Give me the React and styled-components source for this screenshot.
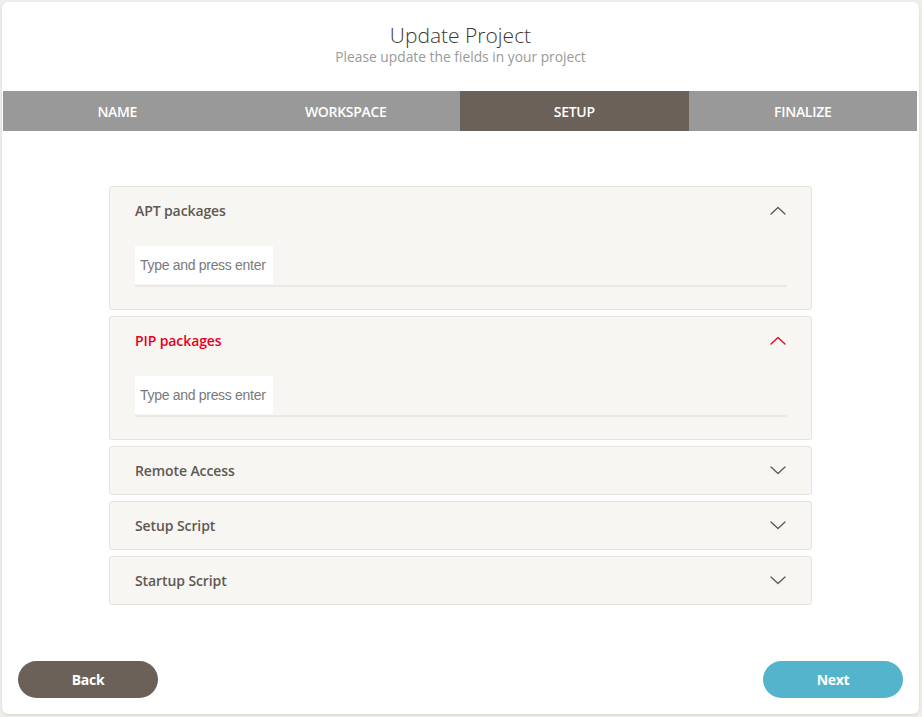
import React, { useState } from 'react';
import styled, { createGlobalStyle } from 'styled-components';

const GlobalStyle = createGlobalStyle`
  html, body {
    margin: 0;
    padding: 0;
    background: #efeeea;
    font-family: "Open Sans", "Liberation Sans", sans-serif;
  }
`;

const steps = ['Name', 'Workspace', 'Setup', 'Finalize'];

const sections = [
  { title: 'APT packages', open: true },
  { title: 'PIP packages', open: true, error: true },
  { title: 'Remote Access' },
  { title: 'Setup Script' },
  { title: 'Startup Script' }
];

const Card = styled.div`
  box-sizing: border-box;
  margin: 2px 3px 3px 2px;
  height: 712px;
  background: #fff;
  border-radius: 6px;
  box-shadow: 0 1px 3px rgba(0, 0, 0, 0.12);
  display: flex;
  flex-direction: column;
  overflow: hidden;
`;

const Header = styled.div`
  padding-top: 20px;
  text-align: center;
  margin-bottom: 25px;
`;

const Title = styled.h1`
  margin: 0;
  font-size: 21px;
  line-height: 26px;
  font-weight: 300;
  color: #3b3835;
`;

const Subtitle = styled.div`
  font-size: 13.8px;
  line-height: 18px;
  color: #9a9a9a;
`;

const Tabs = styled.div`
  display: grid;
  grid-template-columns: repeat(4, 1fr);
  margin: 0 2px 0 1px;
  height: 40px;
  background: #999999;
`;

const Tab = styled.div`
  display: flex;
  align-items: center;
  justify-content: center;
  color: #fff;
  font-size: 14px;
  font-weight: 600;
  text-transform: uppercase;
  letter-spacing: -0.3px;
  background: ${p => (p.$active ? '#6b6159' : 'transparent')};
`;

const Accordion = styled.div`
  width: 703px;
  margin: 55px auto 0;
  display: flex;
  flex-direction: column;
  gap: 6px;
`;

const Panel = styled.div`
  box-sizing: border-box;
  background: #f7f6f3;
  border: 1px solid #e6e3de;
  border-radius: 3px;
  padding: 0 24px ${p => (p.$open ? '22px' : '0')} 25px;
`;

const PanelHead = styled.div`
  height: 47px;
  display: flex;
  align-items: center;
  justify-content: space-between;
  font-size: 14px;
  font-weight: 600;
  letter-spacing: -0.1px;
  color: ${p => (p.$error ? '#e8001c' : '#5f5852')};
  cursor: pointer;
`;

const Chevron = styled.svg`
  width: 16px;
  height: 9px;
  margin-right: 1px;
`;

const Field = styled.div`
  margin-top: 12px;
  border-bottom: 2px solid #ebe9e6;
  padding-bottom: 1px;
`;

const TagInput = styled.input`
  box-sizing: border-box;
  display: block;
  width: 138px;
  height: 38px;
  border: 0;
  outline: none;
  background: #fff;
  padding: 0 5px;
  font-family: "Liberation Sans", Arial, sans-serif;
  font-size: 14px;
  color: #333;
  letter-spacing: -0.3px;
  &::placeholder {
    color: #7a7a7a;
  }
`;

const Spacer = styled.div`
  flex: 1;
`;

const Footer = styled.div`
  display: flex;
  justify-content: space-between;
  padding: 0 16px 16px;
`;

const Button = styled.button`
  width: 140px;
  height: 37px;
  border: 0;
  border-radius: 19px;
  background: ${p => (p.$primary ? '#54b4cc' : '#6b6159')};
  color: #fff;
  font-family: "Open Sans", sans-serif;
  font-size: 14px;
  font-weight: 700;
  letter-spacing: -0.3px;
  cursor: pointer;
`;

const ChevronIcon = ({ up, color }) => (
  <Chevron viewBox="0 0 16 9" fill="none">
    <path
      d={up ? 'M1 8L8 1.5L15 8' : 'M1 1L8 7.5L15 1'}
      stroke={color}
      strokeWidth="1.3"
      strokeLinecap="round"
      strokeLinejoin="round"
    />
  </Chevron>
);

const Section = ({ title, open, error }) => {
  const [isOpen, setOpen] = useState(!!open);
  return (
    <Panel $open={isOpen}>
      <PanelHead $error={error} onClick={() => setOpen(!isOpen)}>
        {title}
        <ChevronIcon up={isOpen} color={error ? '#e8001c' : '#5f5852'} />
      </PanelHead>
      {isOpen && (
        <Field>
          <TagInput placeholder="Type and press enter" />
        </Field>
      )}
    </Panel>
  );
};

export default function App() {
  return (
    <>
      <GlobalStyle />
      <Card>
        <Header>
          <Title>Update Project</Title>
          <Subtitle>Please update the fields in your project</Subtitle>
        </Header>
        <Tabs>
          {steps.map(s => (
            <Tab key={s} $active={s === 'Setup'}>{s}</Tab>
          ))}
        </Tabs>
        <Accordion>
          {sections.map(s => (
            <Section key={s.title} {...s} />
          ))}
        </Accordion>
        <Spacer />
        <Footer>
          <Button>Back</Button>
          <Button $primary>Next</Button>
        </Footer>
      </Card>
    </>
  );
}
